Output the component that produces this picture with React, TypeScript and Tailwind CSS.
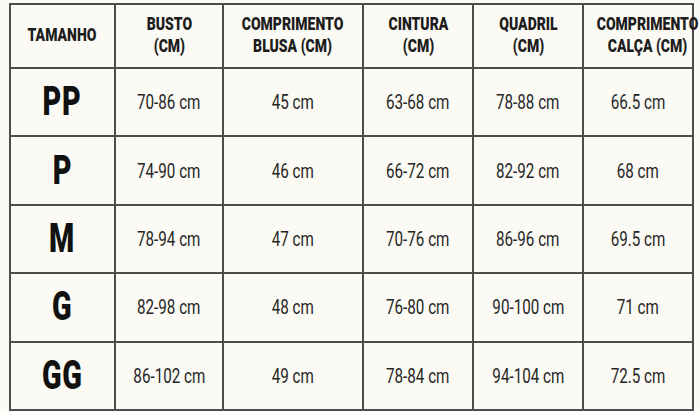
import React from "react";

const headers: string[][] = [
  ["TAMANHO"],
  ["BUSTO", "(CM)"],
  ["COMPRIMENTO", "BLUSA (CM)"],
  ["CINTURA", "(CM)"],
  ["QUADRIL", "(CM)"],
  ["COMPRIMENTO", "CALÇA (CM)"],
];

const rows: string[][] = [
  ["PP", "70-86 cm", "45 cm", "63-68 cm", "78-88 cm", "66.5 cm"],
  ["P", "74-90 cm", "46 cm", "66-72 cm", "82-92 cm", "68 cm"],
  ["M", "78-94 cm", "47 cm", "70-76 cm", "86-96 cm", "69.5 cm"],
  ["G", "82-98 cm", "48 cm", "76-80 cm", "90-100 cm", "71 cm"],
  ["GG", "86-102 cm", "49 cm", "78-84 cm", "94-104 cm", "72.5 cm"],
];

const widths = ["w-[105px]", "w-[108px]", "w-[140px]", "w-[110px]", "w-[110px]", "w-[110px]"];

export default function App() {
  return (
    <div
      className="w-[700px] h-[412px] bg-[#fcfaf4] pl-[9px] pt-[3px] overflow-hidden"
      style={{ fontFamily: "Roboto, 'Liberation Sans', sans-serif" }}
    >
      <table className="border-collapse border-2 border-[#4d4d4d] table-fixed w-[683px]">
        <colgroup>
          {widths.map((w, i) => (
            <col key={i} className={w} />
          ))}
        </colgroup>
        <thead>
          <tr className="h-[64px]">
            {headers.map((h, i) => (
              <th key={i} className="border-2 border-[#4d4d4d] p-0 text-center align-middle">
                <span className="inline-block scale-x-[0.8] text-[17.5px] font-black leading-[22px] text-[#1c1c1c] whitespace-nowrap">
                  {h.map((line, j) => (
                    <span key={j} className="block">
                      {line}
                    </span>
                  ))}
                </span>
              </th>
            ))}
          </tr>
        </thead>
        <tbody>
          {rows.map((r, i) => (
            <tr key={i} className="h-[68.4px]">
              {r.map((c, j) => (
                <td key={j} className="border-2 border-[#4d4d4d] p-0 text-center align-middle">
                  {j === 0 ? (
                    <span className="inline-block scale-x-[0.72] text-[40px] font-black leading-none text-[#111111] tracking-[1px]">
                      {c}
                    </span>
                  ) : (
                    <span className="inline-block scale-x-[0.76] text-[20px] leading-none text-[#262626] pt-[4px] whitespace-nowrap">
                      {c}
                    </span>
                  )}
                </td>
              ))}
            </tr>
          ))}
        </tbody>
      </table>
    </div>
  );
}
